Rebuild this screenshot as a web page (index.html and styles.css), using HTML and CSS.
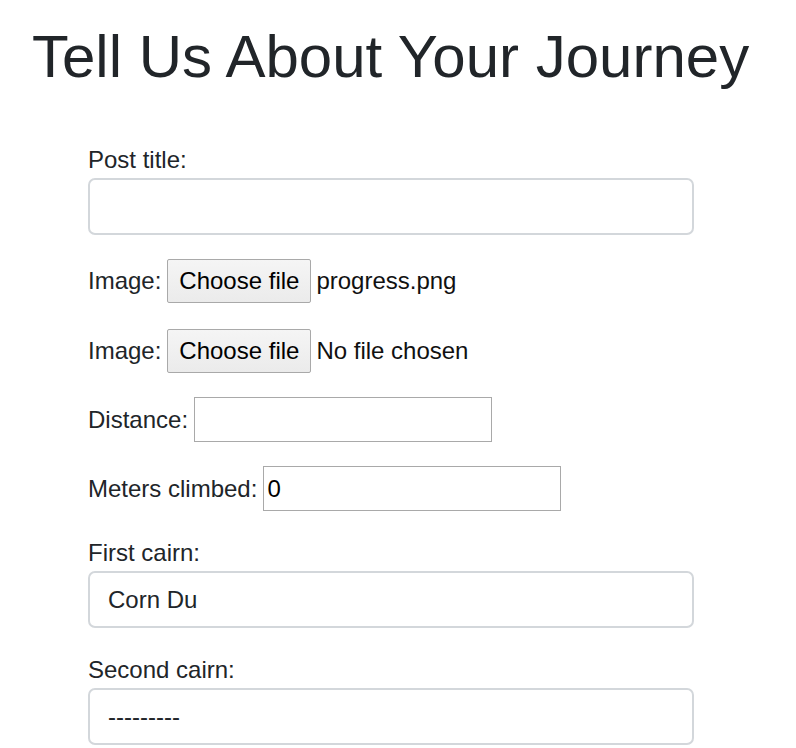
FILE: index.html
```html
<!DOCTYPE html>
<html lang="en">
<head>
<meta charset="utf-8">
<title>Tell Us About Your Journey</title>
<link rel="stylesheet" href="styles.css">
</head>
<body>
<div class="page">
  <h1 class="title">Tell Us About Your Journey</h1>
  <form class="journey-form">
    <div class="group">
      <label class="block-label" for="title">Post title:</label>
      <input class="form-control" id="title" type="text">
    </div>
    <div class="row row-file row-first">
      <span class="inline-label">Image:</span>
      <button type="button" class="file-btn">Choose file</button>
      <span class="file-name">progress.png</span>
    </div>
    <div class="row row-file">
      <span class="inline-label">Image:</span>
      <button type="button" class="file-btn">Choose file</button>
      <span class="file-name">No file chosen</span>
    </div>
    <div class="row row-input">
      <label class="inline-label" for="distance">Distance:</label>
      <input class="plain-input" id="distance" type="text">
    </div>
    <div class="row row-input">
      <label class="inline-label" for="meters">Meters climbed:</label>
      <input class="plain-input" id="meters" type="text" value="0">
    </div>
    <div class="group">
      <label class="block-label" for="cairn1">First cairn:</label>
      <select class="form-control form-select" id="cairn1">
        <option>Corn Du</option>
      </select>
    </div>
    <div class="group">
      <label class="block-label" for="cairn2">Second cairn:</label>
      <select class="form-control form-select" id="cairn2">
        <option>---------</option>
      </select>
    </div>
  </form>
</div>
</body>
</html>
```

FILE: styles.css
```css
* {
  box-sizing: border-box;
}

html, body {
  margin: 0;
  padding: 0;
  background: #ffffff;
}

body {
  font-family: "Liberation Sans", Arial, sans-serif;
  font-size: 24px;
  line-height: 1.5;
  color: #212529;
}

.page {
  padding: 21px 0 0 32px;
}

.title {
  margin: 0 0 49px 0;
  font-size: 60px;
  font-weight: 400;
  line-height: 72px;
  color: #212529;
}

.journey-form {
  margin-left: 56px;
  width: 606px;
}

.group {
  margin-bottom: 24px;
}

.block-label {
  display: block;
  height: 36px;
  line-height: 36px;
}

.form-control {
  display: block;
  width: 606px;
  height: 57px;
  padding: 9px 18px;
  font-family: inherit;
  font-size: 24px;
  line-height: 36px;
  color: #212529;
  background: #ffffff;
  border: 2px solid #d3d7db;
  border-radius: 7px;
  outline: none;
}

.form-select {
  -webkit-appearance: none;
  appearance: none;
}

.row {
  display: flex;
  align-items: center;
  gap: 6px;
  margin-bottom: 24px;
}

.row-file {
  height: 44px;
}

.row-first {
  margin-bottom: 26px;
}

.row-input {
  height: 45px;
}

.inline-label {
  white-space: nowrap;
}

.file-btn {
  height: 44px;
  width: 144px;
  padding: 0;
  font-family: inherit;
  font-size: 24px;
  color: #000000;
  background: linear-gradient(#f5f5f5, #ebebeb);
  border: 1px solid #a9a9a9;
  border-radius: 2px;
}

.file-name {
  margin-left: -1px;
  color: #111111;
  white-space: nowrap;
}

.plain-input {
  width: 298px;
  height: 45px;
  padding: 0 3px;
  font-family: inherit;
  font-size: 24px;
  color: #000000;
  background: #ffffff;
  border: 1px solid #a9a9a9;
  border-radius: 0;
  outline: none;
}
```
